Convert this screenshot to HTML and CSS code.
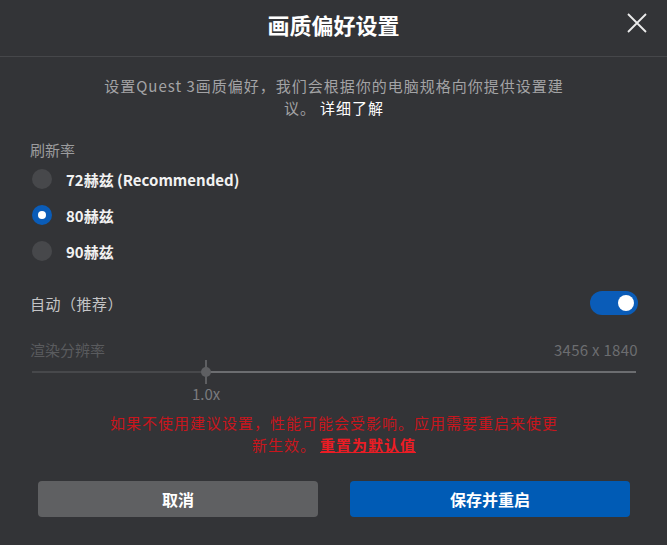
FILE: index.html
```html
<!DOCTYPE html>
<html lang="zh-CN">
<head>
<meta charset="utf-8">
<title>画质偏好设置</title>
<link rel="stylesheet" href="styles.css">
</head>
<body>
<div class="dialog">
  <header class="head">
    <h1 class="title">画质偏好设置</h1>
    <button class="close" aria-label="关闭">
      <svg width="20" height="20" viewBox="0 0 20 20"><path d="M1 1 L19 19 M19 1 L1 19" stroke="#ececec" stroke-width="1.8" fill="none"/></svg>
    </button>
  </header>
  <div class="body">
    <p class="desc">设置Quest 3画质偏好，我们会根据你的电脑规格向你提供设置建议。<a class="more">详细了解</a></p>
    <div class="section-label">刷新率</div>
    <ul class="radios">
      <li class="radio"><span class="dot"></span><span class="radio-text">72赫兹 (Recommended)</span></li>
      <li class="radio checked"><span class="dot"></span><span class="radio-text">80赫兹</span></li>
      <li class="radio"><span class="dot"></span><span class="radio-text">90赫兹</span></li>
    </ul>
    <div class="auto-row">
      <span class="auto-label">自动（推荐）</span>
      <span class="toggle"><span class="knob"></span></span>
    </div>
    <div class="res-row">
      <span>渲染分辨率</span>
      <span class="res-value">3456 x 1840</span>
    </div>
    <div class="slider">
      <div class="track-left" style="width:174px"></div>
      <div class="track-right"></div>
      <div class="thumb" style="left:174px"><span class="tick"></span><span class="ball"></span></div>
    </div>
    <div class="slider-label" style="padding-left:162px">1.0x</div>
    <p class="warn">如果不使用建议设置，性能可能会受影响。应用需要重启来使更新生效。<a class="reset">重置为默认值</a></p>
    <div class="actions">
      <button class="btn cancel">取消</button>
      <button class="btn save">保存并重启</button>
    </div>
  </div>
</div>
</body>
</html>
```
FILE: styles.css
```css
* { box-sizing: border-box; }
html, body {
  margin: 0;
  padding: 0;
  background: #333437;
}
body {
  font-family: "Noto Sans CJK SC", "Microsoft YaHei", sans-serif;
  color: #ffffff;
  width: 667px;
  height: 545px;
  overflow: hidden;
}
.dialog {
  display: flex;
  flex-direction: column;
}
.head {
  height: 57px;
  border-bottom: 1px solid #46474a;
  display: flex;
  align-items: center;
  justify-content: center;
  position: relative;
}
.title {
  margin: 0;
  font-size: 22px;
  font-weight: 700;
  line-height: 30px;
  color: #ffffff;
  padding-bottom: 8px;
}
.close {
  position: absolute;
  right: 20px;
  top: 13px;
  width: 20px;
  height: 20px;
  padding: 0;
  border: 0;
  background: none;
  display: flex;
}
.body {
  display: flex;
  flex-direction: column;
  padding: 0 29px 0 30px;
}
.desc {
  margin: 18px auto 0;
  width: 462px;
  text-align: center;
  font-size: 15px;
  letter-spacing: 1px;
  line-height: 22px;
  color: #a3a3a5;
}
.more {
  color: #ffffff;
  margin-left: 4px;
}
.section-label {
  margin-top: 20px;
  font-size: 15px;
  line-height: 22px;
  color: #9c9c9e;
}
.radios {
  list-style: none;
  margin: 0;
  padding: 0;
}
.radio {
  height: 36px;
  display: flex;
  align-items: center;
  gap: 14px;
  padding-left: 2px;
}
.dot {
  width: 20px;
  height: 20px;
  border-radius: 50%;
  background: #47484b;
  display: flex;
  align-items: center;
  justify-content: center;
}
.checked .dot {
  background: #0a5cb8;
}
.checked .dot::after {
  content: "";
  width: 8px;
  height: 8px;
  border-radius: 50%;
  background: #ffffff;
}
.radio-text {
  font-size: 15px;
  font-weight: 700;
  color: #f2f2f2;
}
.auto-row {
  margin-top: 22px;
  height: 24px;
  display: flex;
  align-items: center;
  justify-content: space-between;
}
.auto-label {
  font-size: 15px;
  letter-spacing: 0.5px;
  color: #c4c4c6;
}
.toggle {
  width: 48px;
  height: 24px;
  border-radius: 12px;
  background: #0a5cb8;
  display: flex;
  align-items: center;
  justify-content: flex-end;
  padding-right: 4px;
}
.knob {
  width: 16px;
  height: 16px;
  border-radius: 50%;
  background: #ffffff;
}
.res-row {
  margin-top: 25px;
  display: flex;
  justify-content: space-between;
  font-size: 15px;
  line-height: 20px;
  color: #5a5b5e;
}
.res-value {
  color: #6c6d70;
  letter-spacing: 0.3px;
}
.slider {
  position: relative;
  height: 24px;
  margin: 0 2px 0 2px;
  display: flex;
  align-items: center;
}
.track-left {
  height: 2px;
  background: #47484b;
}
.track-right {
  flex: 1;
  height: 2px;
  background: #6c6d70;
}
.thumb {
  position: absolute;
  top: 0;
  width: 0;
  height: 24px;
}
.tick {
  position: absolute;
  left: -1px;
  top: 0;
  width: 2px;
  height: 24px;
  background: #5e5f62;
}
.ball {
  position: absolute;
  left: -5px;
  top: 7px;
  width: 10px;
  height: 10px;
  border-radius: 50%;
  background: #5e5f62;
}
.slider-label {
  font-size: 15px;
  line-height: 20px;
  color: #7a7b7e;
}
.warn {
  margin: 8px auto 0;
  width: 456px;
  text-align: center;
  font-size: 15px;
  letter-spacing: 1px;
  line-height: 22px;
  color: #c8161d;
}
.reset {
  color: #ec1c24;
  font-weight: 700;
  text-decoration: underline;
  margin-left: 4px;
}
.actions {
  margin-top: 25px;
  display: flex;
  gap: 32px;
  padding: 0 8px 0 8px;
}
.btn {
  flex: 1;
  height: 36px;
  border: 0;
  border-radius: 4px;
  font-family: inherit;
  font-size: 16px;
  font-weight: 700;
  color: #ffffff;
}
.cancel {
  background: #5f6062;
}
.save {
  background: #005bb5;
}
```
